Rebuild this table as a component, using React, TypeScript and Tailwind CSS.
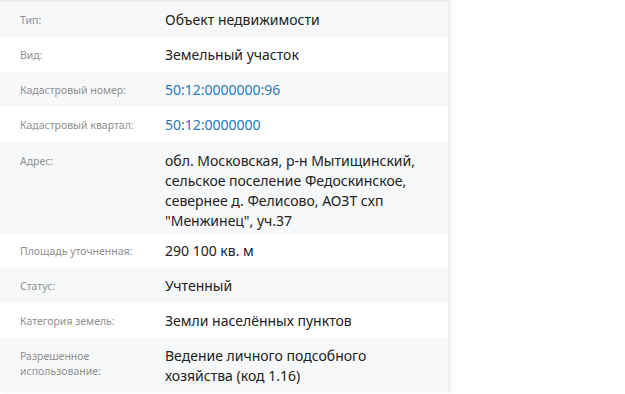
const rows: { label: string; value: string[]; link?: boolean; pad?: string }[] = [
  { label: "Тип:", value: ["Объект недвижимости"] },
  { label: "Вид:", value: ["Земельный участок"] },
  { label: "Кадастровый номер:", value: ["50:12:0000000:96"], link: true },
  { label: "Кадастровый квартал:", value: ["50:12:0000000"], link: true },
  {
    label: "Адрес:",
    value: [
      "обл. Московская, р-н Мытищинский,",
      "сельское поселение Федоскинское,",
      "севернее д. Фелисово, АОЗТ схп",
      "\"Менжинец\", уч.37",
    ],
    pad: "pt-[9px] pb-[2px]",
  },
  { label: "Площадь уточненная:", value: ["290 100 кв. м"] },
  { label: "Статус:", value: ["Учтенный"] },
  { label: "Категория земель:", value: ["Земли населённых пунктов"] },
  {
    label: "Разрешенное использование:",
    value: ["Ведение личного подсобного", "хозяйства (код 1.16)"],
    pad: "pt-[8px] pb-[6px]",
  },
];

export default function App() {
  return (
    <div className="w-[625px] h-[394px] overflow-hidden bg-white font-['Noto_Sans',sans-serif]">
      <div className="w-[449px] border-t-2 border-[#eceef1] border-r border-r-[#eceef1] shadow-[3px_0_5px_rgba(0,0,0,0.05)]">
        {rows.map((row, i) => (
          <div
            key={row.label}
            className={`flex px-5 ${row.pad ?? "py-[7.5px]"} ${i % 2 === 0 ? "bg-[#f7f8fa]" : "bg-white"}`}
          >
            <div className="w-[145px] shrink-0 pr-3 text-[10.5px] leading-[15px] pt-[3px] text-[#909090]">
              {row.label}
            </div>
            <div
              className={`text-[14px] leading-5 ${row.link ? "text-[#2a78b6]" : "text-[#222]"}`}
            >
              {row.value.map((line) => (
                <div key={line}>{line}</div>
              ))}
            </div>
          </div>
        ))}
      </div>
    </div>
  );
}
